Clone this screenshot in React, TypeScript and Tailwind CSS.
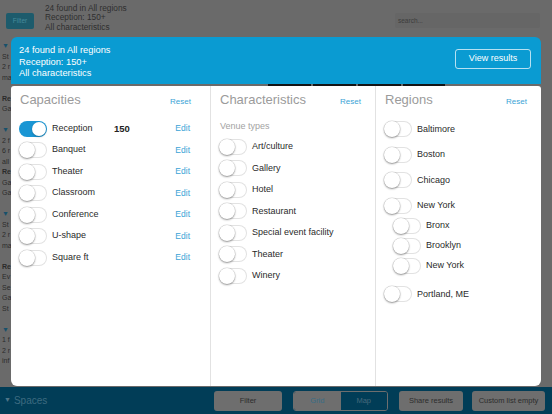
import React from "react";

type Row = { label: string; value?: string; on?: boolean };

const capacities: Row[] = [
  { label: "Reception", value: "150", on: true },
  { label: "Banquet" },
  { label: "Theater" },
  { label: "Classroom" },
  { label: "Conference" },
  { label: "U-shape" },
  { label: "Square ft" },
];

const venueTypes = [
  "Art/culture",
  "Gallery",
  "Hotel",
  "Restaurant",
  "Special event facility",
  "Theater",
  "Winery",
];

// background list, mostly hidden behind the sheet
const bgLines: { t: string; kind: "head" | "bold" | "line" | "gap" }[] = [
  { t: "▼", kind: "head" },
  { t: "St", kind: "line" },
  { t: "2 r", kind: "line" },
  { t: "ma", kind: "line" },
  { t: "", kind: "gap" },
  { t: "Re", kind: "bold" },
  { t: "Ga", kind: "line" },
  { t: "", kind: "gap" },
  { t: "▼", kind: "head" },
  { t: "2 f", kind: "line" },
  { t: "6 r", kind: "line" },
  { t: "all", kind: "line" },
  { t: "Re", kind: "bold" },
  { t: "Ga", kind: "line" },
  { t: "Ga", kind: "line" },
  { t: "", kind: "gap" },
  { t: "▼", kind: "head" },
  { t: "St", kind: "line" },
  { t: "2 r", kind: "line" },
  { t: "ma", kind: "line" },
  { t: "", kind: "gap" },
  { t: "Re", kind: "bold" },
  { t: "Ev", kind: "line" },
  { t: "Se", kind: "line" },
  { t: "Ga", kind: "line" },
  { t: "St", kind: "line" },
  { t: "", kind: "gap" },
  { t: "▼", kind: "head" },
  { t: "1 f", kind: "line" },
  { t: "2 r", kind: "line" },
  { t: "inf", kind: "line" },
];

function Toggle({ on = false }: { on?: boolean }) {
  return (
    <span
      className={`relative block shrink-0 w-[28px] h-[16px] rounded-full ${
        on ? "bg-[#1a96d4]" : "bg-white shadow-[inset_0_0_0_1px_#e2e2e2]"
      }`}
    >
      <span
        className={
          on
            ? "absolute top-[1px] right-[1px] w-[14px] h-[14px] rounded-full bg-white shadow-[0_1px_2px_rgba(0,0,0,0.25)]"
            : "absolute top-0 left-0 w-[16px] h-[16px] rounded-full bg-white shadow-[0_1px_2px_rgba(0,0,0,0.38),0_0_0_0.5px_rgba(0,0,0,0.14)]"
        }
      />
    </span>
  );
}

function ColumnHeader({ title }: { title: string }) {
  return (
    <div className="flex items-baseline justify-between pl-[1px]">
      <span className="text-[13px] leading-[16px] text-[#9b9b9b]">{title}</span>
      <span className="text-[8px] text-[#3aa3d6]">Reset</span>
    </div>
  );
}

function Region({ label, sub = false, className = "" }: { label: string; sub?: boolean; className?: string }) {
  return (
    <div className={`flex items-center h-[16px] ${sub ? "pl-[9px]" : ""} ${className}`}>
      <Toggle />
      <span className="ml-[5px] text-[9px] text-[#2a2a2a]">{label}</span>
    </div>
  );
}

export default function App() {
  return (
    <div className="relative w-[552px] h-[414px] overflow-hidden bg-[#6a6a6a] font-['Liberation_Sans',Arial,sans-serif]">
      {/* dimmed page behind the sheet */}
      <div className="flex flex-col h-full">
        <div className="h-[37px] shrink-0 flex items-start pl-[6px] pr-[12px]">
          <div className="mt-[13px] w-[28px] h-[16px] rounded-[2px] bg-[#1d5b6c] text-[6.5px] text-[#468a9b] flex items-center justify-center">
            Filter
          </div>
          <div className="ml-[11px] mt-[3.5px] text-[8.3px] leading-[9.7px] text-[#2f2f2f]">
            <div>24 found in All regions</div>
            <div>Reception: 150+</div>
            <div>All characteristics</div>
          </div>
          <div className="ml-auto mt-[13px] w-[145px] h-[15px] rounded-[2px] bg-[#666666] text-[6.5px] text-[#3c3c3c] flex items-center pl-[3px]">
            search...
          </div>
        </div>

        <div className="flex-1 flex min-h-0 overflow-hidden">
          <div className="w-[11px] shrink-0 overflow-hidden pl-[2px] pt-[4px] text-[7px] leading-[10.5px] text-[#2a2a2a]">
            {bgLines.map((l, i) =>
              l.kind === "gap" ? (
                <div key={i} className="h-[10.5px]" />
              ) : (
                <div
                  key={i}
                  className={`h-[10.5px] whitespace-nowrap ${
                    l.kind === "bold" ? "font-bold" : l.kind === "head" ? "text-[#17506a]" : ""
                  }`}
                >
                  {l.t}
                </div>
              )
            )}
          </div>
          <div className="ml-[257px] mt-[43px] flex gap-[2px]">
            <div className="w-[43px] h-[6px] bg-[#141414]" />
            <div className="w-[43px] h-[6px] bg-[#141414]" />
            <div className="w-[43px] h-[6px] bg-[#141414]" />
            <div className="w-[42px] h-[6px] bg-[#141414]" />
          </div>
        </div>

        <div className="h-[27px] shrink-0 bg-[#013d57] flex items-center pl-[4px] pr-[7px]">
          <span className="text-[7px] text-[#4f7587]">▼</span>
          <span className="ml-[3px] text-[10px] text-[#3d6b80]">Spaces</span>
          <div className="ml-auto w-[68px] h-[20px] rounded-[3px] bg-[#6e6e6e] text-[7.5px] text-[#2d2d2d] flex items-center justify-center">
            Filter
          </div>
          <div className="ml-[11px] w-[95px] h-[20px] rounded-[3px] border border-[#6e6e6e] flex overflow-hidden text-[7.5px]">
            <div className="flex-1 bg-[#6e6e6e] text-[#386d86] flex items-center justify-center">Grid</div>
            <div className="flex-1 bg-[#013d57] text-[#47697b] flex items-center justify-center">Map</div>
          </div>
          <div className="ml-[11px] w-[64px] h-[20px] rounded-[3px] bg-[#6e6e6e] text-[7.5px] text-[#2d2d2d] flex items-center justify-center">
            Share results
          </div>
          <div className="ml-[9px] w-[73px] h-[20px] rounded-[3px] bg-[#6e6e6e] text-[7.5px] text-[#2d2d2d] flex items-center justify-center">
            Custom list empty
          </div>
        </div>
      </div>

      {/* filter sheet */}
      <div className="absolute left-[11px] top-[37px] w-[530px] flex flex-col gap-[2px]">
        <div className="h-[47px] rounded-t-[6px] bg-[#0a9bd2] flex items-center justify-between pl-[8px] pr-[10px]">
          <div className="mt-[4px] text-[9.3px] leading-[11.5px] text-white">
            <div>24 found in All regions</div>
            <div>Reception: 150+</div>
            <div>All characteristics</div>
          </div>
          <div className="mb-[3px] w-[76px] h-[20px] rounded-[3px] border border-white/70 text-[9px] text-white flex items-center justify-center">
            View results
          </div>
        </div>

        <div className="h-[300px] bg-white rounded-t-[3px] rounded-b-[6px] flex overflow-hidden">
          <div className="w-[200px] shrink-0 border-r border-[#e2e2e2] pl-[8px] pr-[19px] pt-[6px]">
            <ColumnHeader title="Capacities" />
            <div className="mt-[12.7px] flex flex-col gap-[5.5px]">
              {capacities.map((c) => (
                <div key={c.label} className="flex items-center h-[16px]">
                  <Toggle on={c.on} />
                  <span className="ml-[5px] w-[62px] text-[9px] text-[#2a2a2a]">{c.label}</span>
                  <span className="text-[9.5px] font-bold text-[#222]">{c.value}</span>
                  <span className="ml-auto mr-[1px] text-[8.5px] text-[#3aa3d6]">Edit</span>
                </div>
              ))}
            </div>
          </div>

          <div className="w-[165px] shrink-0 border-r border-[#e2e2e2] pl-[8px] pr-[14px] pt-[6px]">
            <ColumnHeader title="Characteristics" />
            <div className="mt-[11.7px] pl-[1px] text-[9px] leading-[12px] text-[#a3a3a3]">Venue types</div>
            <div className="mt-[7.3px] flex flex-col gap-[5.5px]">
              {venueTypes.map((v) => (
                <div key={v} className="flex items-center h-[16px]">
                  <Toggle />
                  <span className="ml-[5px] text-[9px] text-[#2a2a2a]">{v}</span>
                </div>
              ))}
            </div>
          </div>

          <div className="flex-1 pl-[8px] pr-[14px] pt-[6px]">
            <ColumnHeader title="Regions" />
            <div className="mt-[13.3px] flex flex-col">
              <Region label="Baltimore" />
              <Region label="Boston" className="mt-[9.5px]" />
              <Region label="Chicago" className="mt-[9.5px]" />
              <Region label="New York" className="mt-[9.5px]" />
              <Region label="Bronx" sub className="mt-[4px]" />
              <Region label="Brooklyn" sub className="mt-[4px]" />
              <Region label="New York" sub className="mt-[4px]" />
              <Region label="Portland, ME" className="mt-[12.5px]" />
            </div>
          </div>
        </div>
      </div>
    </div>
  );
}
